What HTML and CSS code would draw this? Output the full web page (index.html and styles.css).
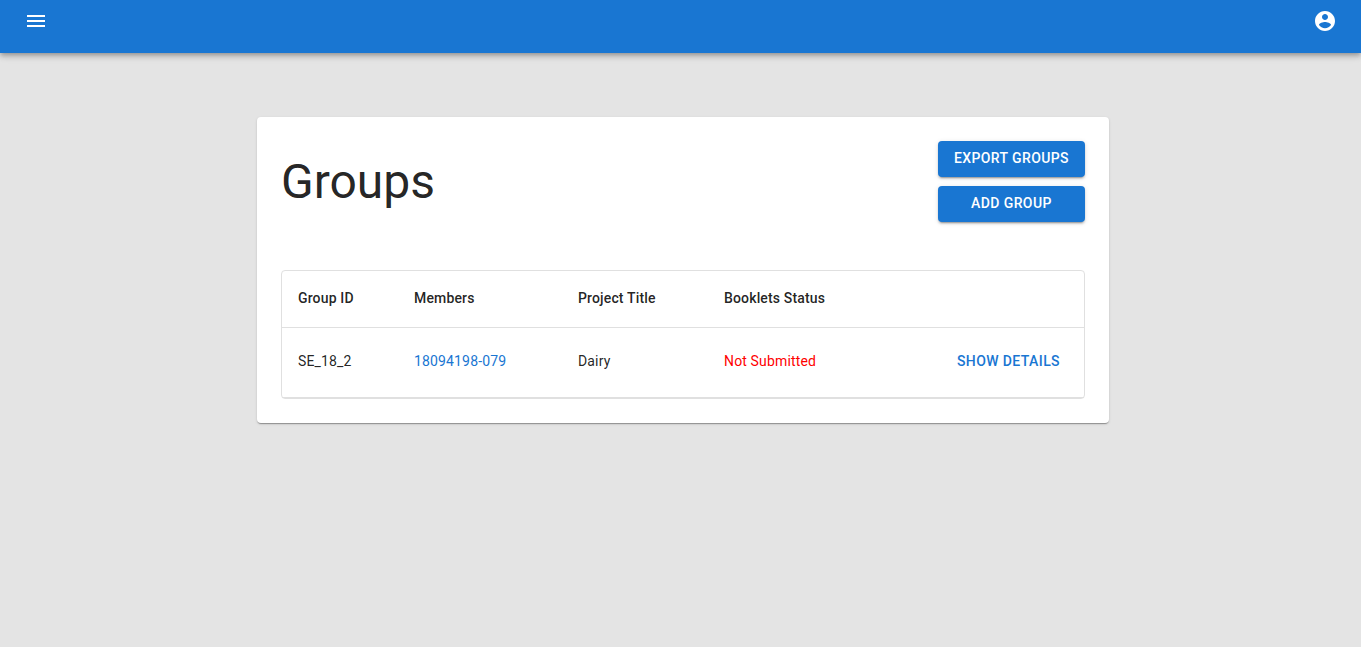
FILE: index.html
```
<!DOCTYPE html>
<html lang="en">
<head>
<meta charset="utf-8">
<title>Groups</title>
<link rel="stylesheet" href="styles.css">
</head>
<body>
<header class="app-bar">
  <button class="icon-button" type="button" aria-label="Menu">
    <svg viewBox="0 0 24 24" aria-hidden="true"><path d="M3 18h18v-2H3v2zm0-5h18v-2H3v2zm0-7v2h18V6H3z"/></svg>
  </button>
  <button class="icon-button" type="button" aria-label="Account">
    <svg viewBox="0 0 24 24" aria-hidden="true"><path d="M12 2C6.48 2 2 6.48 2 12s4.48 10 10 10 10-4.480 10-10S17.520 2 12 2zm0 3c1.660 0 3 1.340 3 3s-1.340 3-3 3-3-1.340-3-3 1.340-3 3-3zm0 14.200c-2.500 0-4.710-1.280-6-3.220.030-1.990 4-3.080 6-3.080 1.990 0 5.970 1.090 6 3.080-1.290 1.940-3.500 3.220-6 3.220z"/></svg>
  </button>
</header>
<main class="page">
  <section class="card">
    <div class="card-header">
      <h1 class="title">Groups</h1>
      <div class="actions">
        <button class="button" type="button">Export Groups</button>
        <button class="button" type="button">Add Group</button>
      </div>
    </div>
    <div class="table-frame">
      <table class="table">
        <colgroup><col class="col-id"><col class="col-members"><col class="col-title"><col class="col-status"><col></colgroup>
        <thead>
          <tr><th scope="col">Group ID</th><th scope="col">Members</th><th scope="col">Project Title</th><th scope="col">Booklets Status</th><td></td></tr>
        </thead>
        <tbody>
          <tr>
            <td>SE_18_2</td>
            <td><a class="member" href="#member">18094198-079</a></td>
            <td>Dairy</td>
            <td class="status">Not Submitted</td>
            <td class="details"><button class="text-button" type="button">Show Details</button></td>
          </tr>
        </tbody>
      </table>
    </div>
  </section>
</main>
</body>
</html>
```

FILE: styles.css
```
* {
  box-sizing: border-box;
}

body {
  margin: 0;
  min-height: 100vh;
  background: #e4e4e4;
  color: rgba(0, 0, 0, 0.87);
  font-family: Roboto, "Liberation Sans", sans-serif;
}

button {
  border: 0;
  font-family: inherit;
  cursor: pointer;
}

.app-bar {
  display: flex;
  justify-content: space-between;
  padding: 1px 16px 12px;
  background: #1976d2;
  box-shadow: 0 2px 4px -1px rgba(0, 0, 0, 0.2), 0 4px 5px rgba(0, 0, 0, 0.14), 0 1px 10px rgba(0, 0, 0, 0.12);
}

.icon-button {
  display: flex;
  padding: 8px;
  background: none;
  color: #fff;
}

.icon-button svg {
  width: 24px;
  height: 24px;
  fill: currentColor;
}

.page {
  padding: 64px 24px 64px 29px;
}

.card {
  max-width: 852px;
  margin: 0 auto;
  padding: 24px;
  border-radius: 4px;
  background: #fff;
  box-shadow: 0 2px 1px -1px rgba(0, 0, 0, 0.2), 0 1px 1px rgba(0, 0, 0, 0.14), 0 1px 3px rgba(0, 0, 0, 0.12);
}

.card-header {
  display: flex;
  align-items: center;
  justify-content: space-between;
  margin-bottom: 48px;
}

.title {
  margin: 0;
  font-size: 48px;
  font-weight: 400;
  line-height: 56px;
}

.actions {
  display: flex;
  flex-direction: column;
  gap: 9px;
}

.button {
  padding: 5px 16px 7px;
  border-radius: 4px;
  background: #1976d2;
  color: #fff;
  font-size: 14px;
  font-weight: 500;
  line-height: 24px;
  letter-spacing: 0.02857em;
  text-transform: uppercase;
  box-shadow: 0 3px 1px -2px rgba(0, 0, 0, 0.2), 0 2px 2px rgba(0, 0, 0, 0.14), 0 1px 5px rgba(0, 0, 0, 0.12);
}

.table-frame {
  border: 1px solid #e0e0e0;
  border-radius: 4px;
}

.table {
  width: 100%;
  border-collapse: collapse;
  table-layout: fixed;
}

.table th,
.table td {
  padding: 15px 16px 17px;
  border-bottom: 1px solid #e0e0e0;
  font-size: 14px;
  line-height: 24px;
  letter-spacing: 0.01071em;
  text-align: left;
}

.table tbody td {
  padding-bottom: 18px;
}

.table th {
  font-weight: 500;
}

.table .details {
  text-align: right;
}

.table .status {
  color: #f00;
}

.col-id {
  width: 116px;
}

.col-members {
  width: 164px;
}

.col-title {
  width: 146px;
}

.col-status {
  width: 160px;
}

.member {
  color: #1976d2;
  text-decoration: none;
}

.text-button {
  padding: 6px 8px;
  background: none;
  color: #1976d2;
  font-size: 14px;
  font-weight: 500;
  line-height: 24px;
  letter-spacing: 0.02857em;
  text-transform: uppercase;
}
```
